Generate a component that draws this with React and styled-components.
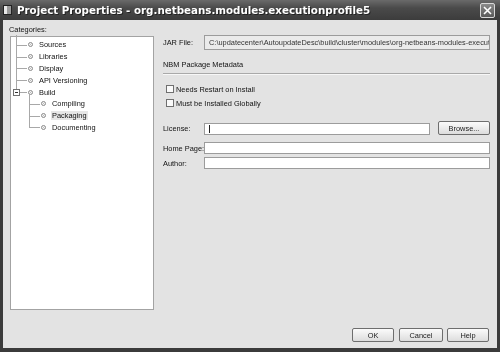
import React from "react";
import styled, { createGlobalStyle } from "styled-components";

const Global = createGlobalStyle`
  html, body { margin: 0; padding: 0; background: #3a3a3a; }
  body { font-family: "Liberation Sans", Arial, sans-serif; }
`;

const Window = styled.div`
  width: 500px;
  height: 352px;
  display: flex;
  flex-direction: column;
  background: #3b3b3b;
  box-sizing: border-box;
  overflow: hidden;
  filter: grayscale(1);
`;

const TitleBar = styled.div`
  height: 20px;
  flex: none;
  display: flex;
  align-items: center;
  padding: 0 3px 0 3px;
  background: linear-gradient(#6a6a6a 0%, #4a4a4a 40%, #3c3c3c 100%);
  color: #fff;
`;

const TitleIcon = styled.span`
  width: 9px;
  height: 10px;
  margin-right: 5px;
  background: linear-gradient(90deg, #e8e8e8 0 3px, #9a9a9a 3px 100%);
  border: 1px solid #222;
  box-sizing: border-box;
`;

const TitleText = styled.span`
  flex: 1;
  font-family: "DejaVu Sans", Verdana, sans-serif;
  font-weight: bold;
  font-size: 10.3px;
  white-space: nowrap;
  text-shadow: 1px 1px 0 #222;
`;

const CloseBtn = styled.span`
  width: 13px;
  height: 13px;
  margin-right: 2px;
  border: 1px solid #d8d8d8;
  border-radius: 2px;
  background: linear-gradient(#8a8a8a, #5a5a5a);
  display: flex;
  align-items: center;
  justify-content: center;
`;

const Body = styled.div`
  flex: 1;
  margin: 0 3px 4px 3px;
  background: #e3e3e3;
  display: flex;
  flex-direction: column;
  padding: 4px 7px 0 7px;
  color: #111;
  font-size: 7.4px;
`;

const Main = styled.div`
  flex: 1;
  display: grid;
  grid-template-columns: 144px 1fr;
  column-gap: 9px;
  min-height: 0;
`;

const LeftCol = styled.div`
  display: flex;
  flex-direction: column;
`;

const Caption = styled.div`
  height: 12px;
  line-height: 11px;
  margin-left: -1px;
`;

const TreePanel = styled.div`
  flex: 1;
  background: #fff;
  border: 1px solid #a3a3a3;
  padding-top: 2px;
`;

const TreeRow = styled.div`
  height: 11.8px;
  display: flex;
  align-items: center;
  padding-left: ${(p) => (p.$level ? 18 : 5)}px;
`;

const Connector = styled.span`
  position: relative;
  width: 11px;
  height: 100%;
  flex: none;
  &::before {
    content: "";
    position: absolute;
    left: 0;
    top: ${(p) => (p.$first ? "-4px" : "0")};
    bottom: ${(p) => (p.$last ? "50%" : "0")};
    border-left: 1px solid #a8a8a8;
  }
  &::after {
    content: "";
    position: absolute;
    left: 0;
    width: 11px;
    top: 50%;
    border-top: 1px solid #a8a8a8;
  }
`;

const Expander = styled.span`
  position: absolute;
  z-index: 1;
  left: -3px;
  top: calc(50% - 3.5px);
  width: 7px;
  height: 7px;
  box-sizing: border-box;
  border: 1px solid #707070;
  background: #fff;
  &::before {
    content: "";
    position: absolute;
    left: 1px;
    right: 1px;
    top: 2px;
    height: 1px;
    background: #333;
  }
`;

const Bullet = styled.span`
  width: 5px;
  height: 5px;
  flex: none;
  margin: 0 0 0 1px;
  border-radius: 50%;
  border: 1px solid #8a8a8a;
  background: radial-gradient(circle, #bbb 0 35%, #f4f4f4 45%);
  box-sizing: border-box;
`;

const NodeLabel = styled.span`
  margin-left: 5px;
  padding: 0 1px;
  line-height: 9px;
  background: ${(p) => (p.$selected ? "#e6e6e6" : "transparent")};
  white-space: nowrap;
`;

const RightCol = styled.div`
  display: flex;
  flex-direction: column;
  padding-top: 11px;
`;

const FormRow = styled.div`
  display: grid;
  grid-template-columns: 41px 1fr ${(p) => (p.$withButton ? "60px" : "")};
  align-items: center;
  margin-top: ${(p) => p.$mt || 0}px;
  height: ${(p) => p.$h || 12}px;
`;

const Label = styled.span`
  white-space: nowrap;
`;

const Field = styled.div`
  height: ${(p) => p.$h || 12}px;
  align-self: ${(p) => (p.$bottom ? "end" : "center")};
  box-sizing: border-box;
  border: 1px solid #9c9c9c;
  background: ${(p) => (p.$disabled ? "#ebebeb" : "#fff")};
  color: #333;
  padding-left: 4px;
  display: flex;
  align-items: center;
  overflow: hidden;
  white-space: nowrap;
`;

const Caret = styled.span`
  width: 1px;
  height: 8px;
  background: #222;
`;

const SectionTitle = styled.div`
  margin-top: 9px;
  line-height: 11px;
`;

const Separator = styled.div`
  margin-top: 3px;
  height: 1px;
  background: #a9a9a9;
  border-bottom: 1px solid #f7f7f7;
`;

const CheckRow = styled.label`
  display: flex;
  align-items: center;
  height: 10px;
  margin-top: ${(p) => p.$mt}px;
  padding-left: 3px;
`;

const CheckBox = styled.span`
  width: 8px;
  height: 8px;
  box-sizing: border-box;
  border: 1px solid #6f6f6f;
  background: #fafafa;
  margin-right: 2px;
`;

const Button = styled.div`
  width: ${(p) => p.$w}px;
  height: 14px;
  box-sizing: border-box;
  border: 1px solid #6e6e6e;
  border-radius: 2px;
  background: linear-gradient(#fbfbfb, #e9e9e9 60%, #dcdcdc);
  display: flex;
  align-items: center;
  justify-content: center;
  color: #222;
  justify-self: end;
  margin-right: ${(p) => p.$mr || 0}px;
`;

const Footer = styled.div`
  height: 38px;
  flex: none;
  display: flex;
  justify-content: flex-end;
  align-items: flex-end;
  gap: 4px;
  padding: 0 1px 6px 0;
  box-sizing: border-box;
`;

const nodes = [
  { label: "Sources", level: 0, first: true },
  { label: "Libraries", level: 0 },
  { label: "Display", level: 0 },
  { label: "API Versioning", level: 0 },
  { label: "Build", level: 0, last: true, expanded: true },
  { label: "Compiling", level: 1, first: true },
  { label: "Packaging", level: 1, selected: true },
  { label: "Documenting", level: 1, last: true },
];

export default function App() {
  return (
    <Window>
      <Global />
      <TitleBar>
        <TitleIcon />
        <TitleText>Project Properties - org.netbeans.modules.executionprofile5</TitleText>
        <CloseBtn>
          <svg width="9" height="9" viewBox="0 0 9 9">
            <path d="M1 1 L8 8 M8 1 L1 8" stroke="#fff" strokeWidth="1.6" />
          </svg>
        </CloseBtn>
      </TitleBar>
      <Body>
        <Main>
          <LeftCol>
            <Caption>Categories:</Caption>
            <TreePanel>
              {nodes.map((n) => (
                <TreeRow key={n.label} $level={n.level}>
                  <Connector $first={n.first} $last={n.last}>
                    {n.expanded && <Expander />}
                  </Connector>
                  <Bullet />
                  <NodeLabel $selected={n.selected}>{n.label}</NodeLabel>
                </TreeRow>
              ))}
            </TreePanel>
          </LeftCol>
          <RightCol>
            <FormRow $h={15}>
              <Label>JAR File:</Label>
              <Field $h={15} $disabled>
                C:\updatecenter\AutoupdateDesc\build\cluster\modules\org-netbeans-modules-executionprofile5.jar
              </Field>
            </FormRow>
            <SectionTitle>NBM Package Metadata</SectionTitle>
            <Separator />
            <CheckRow $mt={9}>
              <CheckBox />
              Needs Restart on Install
            </CheckRow>
            <CheckRow $mt={4}>
              <CheckBox />
              Must be Installed Globally
            </CheckRow>
            <FormRow $withButton $mt={13} $h={14}>
              <Label>License:</Label>
              <Field $bottom>
                <Caret />
              </Field>
              <Button $w={52}>Browse...</Button>
            </FormRow>
            <FormRow $mt={7}>
              <Label>Home Page:</Label>
              <Field />
            </FormRow>
            <FormRow $mt={3}>
              <Label>Author:</Label>
              <Field />
            </FormRow>
          </RightCol>
        </Main>
        <Footer>
          <Button $w={42} $mr={1}>OK</Button>
          <Button $w={44}>Cancel</Button>
          <Button $w={42}>Help</Button>
        </Footer>
      </Body>
    </Window>
  );
}
